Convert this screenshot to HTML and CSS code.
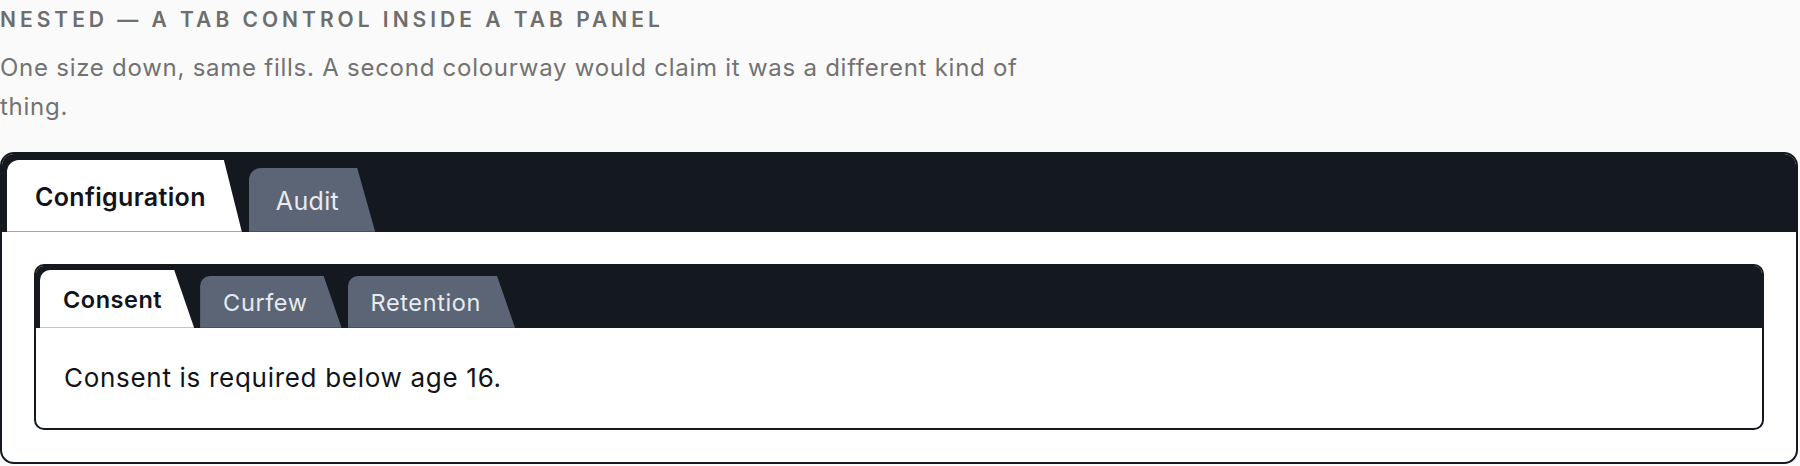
FILE: index.html
```html
<!DOCTYPE html>
<html lang="en">
<head>
  <meta charset="UTF-8">
  <meta name="viewport" content="width=device-width, initial-scale=1.0">
  <title>Nested tabs</title>
  <link rel="stylesheet" href="styles.css">
</head>
<body>
  <h2 class="section-title">Nested — a tab control inside a tab panel</h2>
  <p class="section-note">One size down, same fills. A second colourway would claim it was a different kind of thing.</p>

  <div class="tabs">
    <div class="tabs-strip">
      <span class="tab active">Configuration</span>
      <span class="tab">Audit</span>
    </div>
    <div class="tabs-panel">

      <!-- tab control nested in the panel -->
      <div class="tabs tabs-small">
        <div class="tabs-strip">
          <span class="tab active">Consent</span>
          <span class="tab">Curfew</span>
          <span class="tab">Retention</span>
        </div>
        <div class="tabs-panel">
          Consent is required below age 16.
        </div>
      </div>

    </div>
  </div>
</body>
</html>
```

FILE: styles.css
```css
body {
  font-family: Inter, "Noto Sans", sans-serif;
  background-color: #fafafa;
  color: #111318;
  letter-spacing: 0.022em;
  margin: 0;
  padding: 4px 2px 0 0;
}

.section-title {
  margin: 0;
  font-size: 21px;
  line-height: 1.5;
  font-weight: 600;
  letter-spacing: 0.19em;
  text-transform: uppercase;
  color: #6e6e6e;
}

.section-note {
  margin: 12px 0 0;
  max-width: 1050px;
  font-size: 24px;
  line-height: 1.65;
  letter-spacing: 0.031em;
  color: #727272;
}

.tabs {
  margin-top: 25px;
  border: 2px solid #14181f;
  border-radius: 14px;
  overflow: hidden;
  background-color: #fff;
}

.tabs-strip {
  display: flex;
  align-items: flex-end;
  gap: 7px;
  padding: 6px 5px 0;
  background-color: #14181f;
}

.tab {
  display: flex;
  align-items: center;
  height: 64px;
  padding: 3px 36px 0 27px;
  box-sizing: border-box;
  font-size: 25px;
  color: #e9ebef;
  background-color: #5b6576;
  border-radius: 12px 0 0 0;
  clip-path: polygon(0 0, calc(100% - 18px) 0, 100% 100%, 0 100%);
  white-space: nowrap;
}

.tab.active {
  height: 72px;
  padding-left: 28px;
  font-weight: 600;
  color: #111318;
  background-color: #fff;
  box-shadow: inset 0 -1px 0 #9c9c9c;
}

.tabs-panel {
  padding: 32px;
}

/* versione piccola, dentro il pannello */
.tabs-small {
  margin-top: 0;
  border-radius: 10px;
}

.tabs-small .tabs-strip {
  gap: 6px;
  padding: 4px 4px 0;
}

.tabs-small .tab {
  height: 52px;
  padding: 1px 34px 0 23px;
  font-size: 23.5px;
  letter-spacing: 0.026em;
  border-radius: 10px 0 0 0;
}

.tabs-small .tab.active {
  height: 58px;
  padding-left: 23px;
  padding-right: 32px;
  letter-spacing: 0.022em;
  box-shadow: none;
  clip-path: polygon(0 0, calc(100% - 20px) 0, 100% 100%, 0 100%);
}

.tabs-small .tabs-panel {
  padding: 30px 28px;
  font-size: 26px;
  line-height: 40px;
  letter-spacing: 0.027em;
}
```
